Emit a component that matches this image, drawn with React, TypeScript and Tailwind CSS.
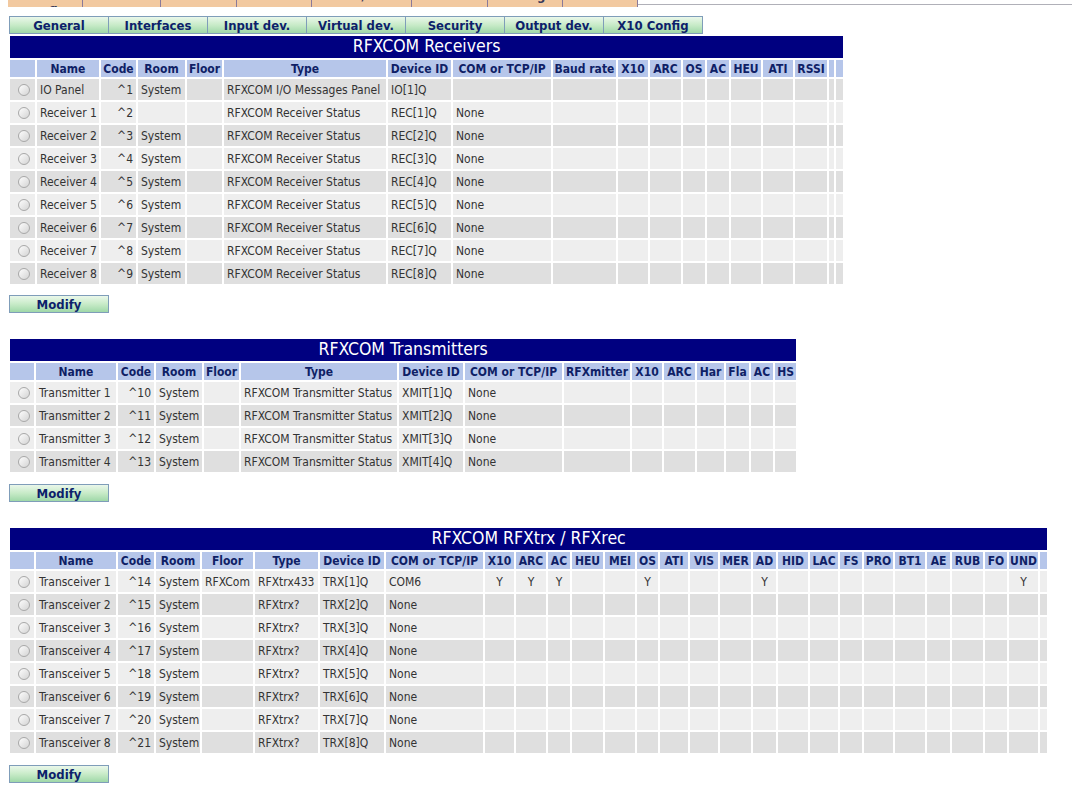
import React from 'react';

type Col = { label: string; w: string; align?: 'left' | 'right' | 'center' };

const FONT = "font-['DejaVu_Sans_Condensed','DejaVu_Sans',sans-serif]";

const tabs = ['General', 'Interfaces', 'Input dev.', 'Virtual dev.', 'Security', 'Output dev.', 'X10 Config'];

const receiverCols: Col[] = [
  { label: '', w: 'w-[25px]' },
  { label: 'Name', w: 'w-[62px]' },
  { label: 'Code', w: 'w-[35px]', align: 'right' },
  { label: 'Room', w: 'w-[47px]' },
  { label: 'Floor', w: 'w-[35px]' },
  { label: 'Type', w: 'w-[162px]' },
  { label: 'Device ID', w: 'w-[63px]' },
  { label: 'COM or TCP/IP', w: 'w-[98px]' },
  { label: 'Baud rate', w: 'w-[63px]' },
  { label: 'X10', w: 'w-[30px]', align: 'center' },
  { label: 'ARC', w: 'w-[31px]', align: 'center' },
  { label: 'OS', w: 'w-[22px]', align: 'center' },
  { label: 'AC', w: 'w-[22px]', align: 'center' },
  { label: 'HEU', w: 'w-[30px]', align: 'center' },
  { label: 'ATI', w: 'w-[30px]', align: 'center' },
  { label: 'RSSI', w: 'w-[32px]', align: 'center' },
  { label: '', w: 'w-[5px]' },
  { label: '', w: 'w-[7px]' },
];

const receiverRows: string[][] = [
  ['IO Panel', '^1', 'System', '', 'RFXCOM I/O Messages Panel', 'IO[1]Q', ''],
  ['Receiver 1', '^2', '', '', 'RFXCOM Receiver Status', 'REC[1]Q', 'None'],
  ...[2, 3, 4, 5, 6, 7, 8].map((n) => [
    `Receiver ${n}`,
    `^${n + 1}`,
    'System',
    '',
    'RFXCOM Receiver Status',
    `REC[${n}]Q`,
    'None',
  ]),
];

const xmitCols: Col[] = [
  { label: '', w: 'w-[24px]' },
  { label: 'Name', w: 'w-[80px]' },
  { label: 'Code', w: 'w-[36px]', align: 'right' },
  { label: 'Room', w: 'w-[46px]' },
  { label: 'Floor', w: 'w-[35px]' },
  { label: 'Type', w: 'w-[156px]' },
  { label: 'Device ID', w: 'w-[64px]' },
  { label: 'COM or TCP/IP', w: 'w-[97px]' },
  { label: 'RFXmitter', w: 'w-[66px]' },
  { label: 'X10', w: 'w-[30px]', align: 'center' },
  { label: 'ARC', w: 'w-[31px]', align: 'center' },
  { label: 'Har', w: 'w-[27px]', align: 'center' },
  { label: 'Fla', w: 'w-[23px]', align: 'center' },
  { label: 'AC', w: 'w-[22px]', align: 'center' },
  { label: 'HS', w: 'w-[21px]', align: 'center' },
];

const xmitRows: string[][] = [1, 2, 3, 4].map((n) => [
  `Transmitter ${n}`,
  `^${n + 9}`,
  'System',
  '',
  'RFXCOM Transmitter Status',
  `XMIT[${n}]Q`,
  'None',
]);

const trxCols: Col[] = [
  { label: '', w: 'w-[24px]' },
  { label: 'Name', w: 'w-[80px]' },
  { label: 'Code', w: 'w-[36px]', align: 'right' },
  { label: 'Room', w: 'w-[44px]' },
  { label: 'Floor', w: 'w-[51px]' },
  { label: 'Type', w: 'w-[63px]' },
  { label: 'Device ID', w: 'w-[64px]' },
  { label: 'COM or TCP/IP', w: 'w-[97px]' },
  { label: 'X10', w: 'w-[29px]', align: 'center' },
  { label: 'ARC', w: 'w-[30px]', align: 'center' },
  { label: 'AC', w: 'w-[22px]', align: 'center' },
  { label: 'HEU', w: 'w-[31px]', align: 'center' },
  { label: 'MEI', w: 'w-[30px]', align: 'center' },
  { label: 'OS', w: 'w-[21px]', align: 'center' },
  { label: 'ATI', w: 'w-[28px]', align: 'center' },
  { label: 'VIS', w: 'w-[28px]', align: 'center' },
  { label: 'MER', w: 'w-[31px]', align: 'center' },
  { label: 'AD', w: 'w-[23px]', align: 'center' },
  { label: 'HID', w: 'w-[30px]', align: 'center' },
  { label: 'LAC', w: 'w-[28px]', align: 'center' },
  { label: 'FS', w: 'w-[22px]', align: 'center' },
  { label: 'PRO', w: 'w-[29px]', align: 'center' },
  { label: 'BT1', w: 'w-[30px]', align: 'center' },
  { label: 'AE', w: 'w-[23px]', align: 'center' },
  { label: 'RUB', w: 'w-[31px]', align: 'center' },
  { label: 'FO', w: 'w-[22px]', align: 'center' },
  { label: 'UND', w: 'w-[29px]', align: 'center' },
  { label: '', w: 'w-[7px]' },
];

const trxCodes = ['^14', '^15', '^16', '^17', '^18', '^19', '^20', '^21'];

const trxRows: string[][] = [
  ['Transceiver 1', '^14', 'System', 'RFXCom', 'RFXtrx433', 'TRX[1]Q', 'COM6',
    'Y', 'Y', 'Y', '', '', 'Y', '', '', '', 'Y', '', '', '', '', '', '', '', '', 'Y'],
  ...[2, 3, 4, 5, 6, 7, 8].map((n) => [
    `Transceiver ${n}`,
    trxCodes[n - 1],
    'System',
    '',
    'RFXtrx?',
    `TRX[${n}]Q`,
    'None',
  ]),
];

function Radio() {
  return (
    <div className="mx-auto h-[12px] w-[12px] rounded-full border border-[#a8a8a8] bg-gradient-to-br from-[#fdfdfd] to-[#d4d4d4]" />
  );
}

function GreenButton({ label, className = '' }: { label: string; className?: string }) {
  return (
    <div
      className={`flex h-[18px] w-[100px] items-center justify-center border border-[#7f9db9] bg-gradient-to-b from-[#eaf7ea] via-[#c8ebc8] to-[#9fd8a8] text-[13px] leading-none font-bold text-[#0d1f6b] ${className}`}
    >
      {label}
    </div>
  );
}

function DeviceTable({
  title,
  cols,
  rows,
  width,
  startDark,
}: {
  title: string;
  cols: Col[];
  rows: string[][];
  width: string;
  startDark: boolean;
}) {
  return (
    <table className={`table-fixed border-separate border-spacing-[2px] ${width}`}>
      <colgroup>
        {cols.map((c, i) => (
          <col key={i} className={c.w} />
        ))}
      </colgroup>
      <thead>
        <tr>
          <th
            colSpan={cols.length}
            className="h-[22px] bg-[#000080] p-0 text-center text-[17.5px] leading-none font-normal text-white"
          >
            {title}
          </th>
        </tr>
        <tr>
          {cols.map((c, i) => (
            <th
              key={i}
              className="h-[17px] overflow-hidden bg-[#b6c6ea] p-0 text-center text-[12px] leading-none font-bold whitespace-nowrap text-[#0f1f66]"
            >
              {c.label}
            </th>
          ))}
        </tr>
      </thead>
      <tbody>
        {rows.map((r, ri) => {
          const dark = startDark ? ri % 2 === 0 : ri % 2 === 1;
          const bg = dark ? 'bg-[#dfdfdf]' : 'bg-[#eeeeee]';
          return (
            <tr key={ri}>
              {cols.map((c, ci) => {
                const v = ci === 0 ? '' : r[ci - 1] ?? '';
                const align =
                  c.align === 'right' ? 'text-right pr-[3px]' : c.align === 'center' ? 'text-center' : 'text-left pl-[3px]';
                return (
                  <td
                    key={ci}
                    className={`h-[21px] overflow-hidden p-0 text-[12px] leading-none whitespace-nowrap text-[#333333] ${bg} ${align}`}
                  >
                    {ci === 0 ? <Radio /> : v}
                  </td>
                );
              })}
            </tr>
          );
        })}
      </tbody>
    </table>
  );
}

export default function App() {
  return (
    <div className={`min-h-[788px] w-[1072px] bg-white ${FONT}`}>
      {/* cut-off upper menu strip */}
      <div className="flex h-[8px] items-start overflow-hidden">
        <div className="ml-[8px] flex h-[7px] w-[630px] overflow-hidden bg-[#f2c9a0]">
          {['Device Config', 'Automation', 'RFXCOM', 'Weather', 'Sunrise/Sunset', 'Dashboard', 'Settings', 'Charts'].map((t) => (
            <div
              key={t}
              className="-mt-[12px] flex-1 border-r border-[#8a7a9a] text-center text-[13px] leading-[16px] font-bold text-[#3a3a5a]"
            >
              {t}
            </div>
          ))}
        </div>
        <div className="mt-[4px] h-[1px] flex-1 bg-[#b0b0b8]" />
      </div>

      {/* tab bar */}
      <div className="mt-[8px] ml-[9px] flex">
        {tabs.map((t) => (
          <GreenButton key={t} label={t} className="-mr-[1px]" />
        ))}
      </div>

      <div className="ml-[8px]">
        <DeviceTable title="RFXCOM Receivers" cols={receiverCols} rows={receiverRows} width="w-[837px]" startDark />
        <GreenButton label="Modify" className="mt-[9px] ml-[1px]" />

        <div className="h-[24px]" />
        <DeviceTable title="RFXCOM Transmitters" cols={xmitCols} rows={xmitRows} width="w-[790px]" startDark={false} />
        <GreenButton label="Modify" className="mt-[10px] ml-[1px]" />

        <div className="h-[24px]" />
        <DeviceTable title="RFXCOM RFXtrx / RFXrec" cols={trxCols} rows={trxRows} width="w-[1041px]" startDark={false} />
        <GreenButton label="Modify" className="mt-[10px] ml-[1px]" />
      </div>
    </div>
  );
}
